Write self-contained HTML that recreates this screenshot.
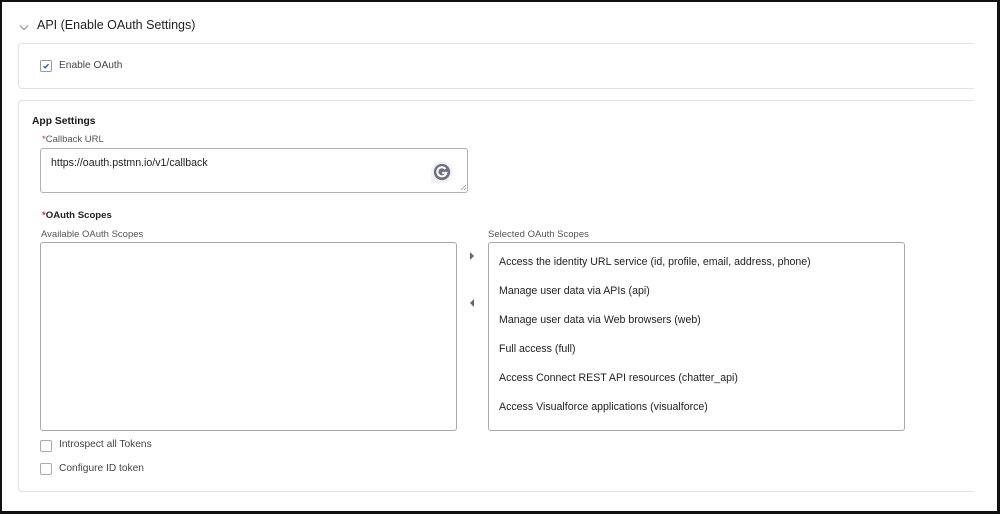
<!DOCTYPE html>
<html><head><style>
*{margin:0;padding:0;box-sizing:border-box}
body{width:1000px;height:514px;background:#fff;position:relative;overflow:hidden;font-family:"Liberation Sans",sans-serif;color:#181818}
.frame{position:absolute;left:0;top:0;width:1000px;height:514px;border:2px solid #111;border-right-width:3px;border-bottom-width:3px}
.a{position:absolute;white-space:nowrap}
.card{position:absolute;border:1px solid #e2e2e2;border-right:none;border-radius:4px 0 0 4px}
.cb{position:absolute;width:12px;height:12px;border:1px solid #aaa;border-radius:2px;background:#fff}
.lbl{font-size:9.5px;color:#555}
.box{position:absolute;border:1px solid #a8a8a8;border-radius:3px}
.item{font-size:10.6px;color:#222;position:absolute;left:10px}
.req{color:#c23934}
</style></head><body>
<div class="frame"></div>
<svg class="a" style="left:19px;top:24px" width="10" height="7" viewBox="0 0 10 7"><path d="M1 1.5 L5 5.5 L9 1.5" fill="none" stroke="#888" stroke-width="1"/></svg>
<div class="a" style="left:37px;top:18px;font-size:12.5px;color:#222">API (Enable OAuth Settings)</div>
<div class="card" style="left:18px;top:43px;width:956px;height:46px"></div>
<div class="cb" style="left:40px;top:60px;border-color:#999"><svg width="10" height="10" viewBox="0 0 10 10" style="position:absolute;left:0;top:0"><path d="M2.5 5.2 L4.2 6.8 L7.5 3.2" fill="none" stroke="#1b5fc1" stroke-width="1.4"/></svg></div>
<div class="a" style="left:59px;top:60px;font-size:10.2px;color:#444">Enable OAuth</div>
<div class="card" style="left:18px;top:100px;width:956px;height:392px"></div>
<div class="a" style="left:32px;top:116px;font-size:10.3px;font-weight:bold">App Settings</div>
<div class="a lbl" style="left:42px;top:134px"><span class="req">*</span>Callback URL</div>
<div class="box" style="left:40px;top:148px;width:428px;height:45px;border-color:#b0b0b0"></div>
<div class="a" style="left:51px;top:157px;font-size:10.6px;color:#222">https://oauth.pstmn.io/v1/callback</div>
<svg class="a" style="left:429px;top:159px" width="26" height="26" viewBox="0 0 24 24"><path d="M12 2a10 10 0 1 1 0 20H2v-10a10 10 0 0 1 10-10z" fill="#eef0f4"/><circle cx="12" cy="12" r="7.5" fill="#6c7184"/><path d="M15.2 9.2A4.2 4.2 0 1 0 16 12.8H12.2" fill="none" stroke="#fff" stroke-width="1.9"/></svg>
<svg class="a" style="left:459px;top:183px" width="8" height="8"><path d="M2 7L7 2M5 7L7 5" stroke="#999" stroke-width="0.8"/></svg>
<div class="a" style="left:42px;top:210px;font-size:9.6px;font-weight:bold;color:#222"><span class="req">*</span>OAuth Scopes</div>
<div class="a lbl" style="left:41px;top:229px">Available OAuth Scopes</div>
<div class="box" style="left:40px;top:242px;width:417px;height:189px"></div>
<div class="a lbl" style="left:488px;top:229px">Selected OAuth Scopes</div>
<div class="box" style="left:488px;top:242px;width:417px;height:189px">
<div class="item" style="top:13px">Access the identity URL service (id, profile, email, address, phone)</div>
<div class="item" style="top:42px">Manage user data via APIs (api)</div>
<div class="item" style="top:71px">Manage user data via Web browsers (web)</div>
<div class="item" style="top:100px">Full access (full)</div>
<div class="item" style="top:129px">Access Connect REST API resources (chatter_api)</div>
<div class="item" style="top:158px">Access Visualforce applications (visualforce)</div>
</div>
<svg class="a" style="left:469px;top:252px" width="6" height="8"><path d="M1 0L5 4L1 8z" fill="#666"/></svg>
<svg class="a" style="left:469px;top:299px" width="6" height="8"><path d="M5 0L1 4L5 8z" fill="#666"/></svg>
<div class="cb" style="left:40px;top:440px"></div>
<div class="a" style="left:59px;top:439px;font-size:10.2px;color:#444">Introspect all Tokens</div>
<div class="cb" style="left:40px;top:463px"></div>
<div class="a" style="left:59px;top:463px;font-size:10.2px;color:#444">Configure ID token</div>
</body></html>
